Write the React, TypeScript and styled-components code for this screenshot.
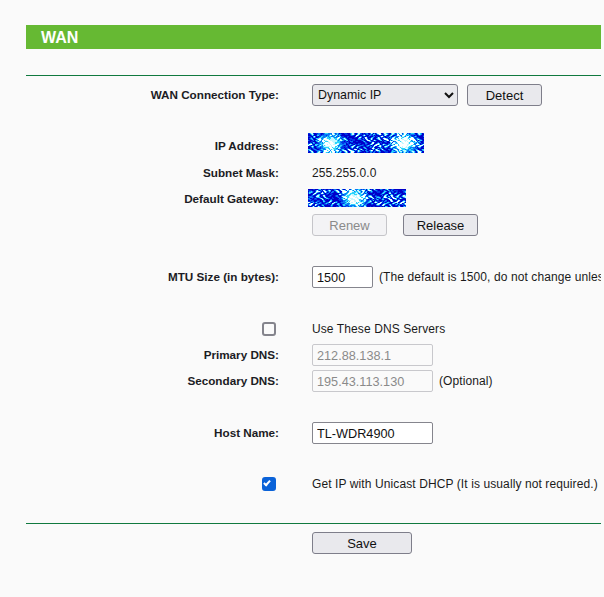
import React, { useMemo } from 'react';
import styled, { createGlobalStyle } from 'styled-components';

const GlobalStyle = createGlobalStyle`
  html, body {
    margin: 0;
    padding: 0;
    height: 100%;
    overflow: hidden;
    background: #fafafa;
  }
  body {
    font-family: Arial, "Liberation Sans", sans-serif;
    font-size: 12px;
    letter-spacing: 0.1px;
    color: #1a1a1a;
  }
`;

const Page = styled.div`
  width: 575px;
  height: 597px;
  margin-left: 26px;
  padding-top: 25px;
  box-sizing: border-box;
  overflow: hidden;
`;

const TitleBar = styled.div`
  height: 24px;
  line-height: 25px;
  background: #66b933;
  color: #fff;
  font-size: 16px;
  font-weight: 700;
  letter-spacing: 0;
  padding-left: 15px;
`;

const Divider = styled.div<{ $top: number }>`
  height: 1px;
  background: #10793f;
  margin-top: ${(props) => props.$top}px;
`;

const Row = styled.div<{ $height: number; $top?: number }>`
  display: grid;
  grid-template-columns: 253px 33px max-content;
  align-items: center;
  height: ${(props) => props.$height}px;
  margin-top: ${(props) => props.$top ?? 0}px;
  white-space: nowrap;
`;

const Label = styled.label`
  grid-column: 1;
  text-align: right;
  font-size: 11.7px;
  font-weight: 700;
  letter-spacing: 0;
  color: #1c1c24;
  padding-bottom: 2px;
`;

const CheckCell = styled.div`
  grid-column: 1;
  display: flex;
  justify-content: flex-end;
  padding-right: 3px;
`;

const Value = styled.div<{ $lift?: number }>`
  grid-column: 3;
  display: flex;
  align-items: center;
  margin-bottom: ${(props) => props.$lift ?? 0}px;
`;

const Plain = styled.span<{ $gap?: number }>`
  color: #1a1a1a;
  margin-left: ${(props) => props.$gap ?? 0}px;
`;

const Button = styled.button<{ $width: number; $gap?: number }>`
  width: ${(props) => props.$width}px;
  height: 22px;
  margin-left: ${(props) => props.$gap ?? 0}px;
  padding: 0;
  box-sizing: border-box;
  border: 1px solid #7e7e8a;
  border-radius: 3px;
  background: #e9e9ed;
  color: #111;
  font: 13px Arial, "Liberation Sans", sans-serif;

  &:disabled {
    border-color: #c5c5c9;
    background: #f3f3f5;
    color: #8a8a8a;
  }
`;

const Select = styled.select`
  width: 146px;
  height: 22px;
  box-sizing: border-box;
  padding: 0 0 0 1px;
  border: 1px solid #7e7e8a;
  border-radius: 3px;
  background: #e9e9ed;
  color: #111;
  font: 12.4px Arial, "Liberation Sans", sans-serif;
`;

const TextInput = styled.input<{ $width: number }>`
  width: ${(props) => props.$width}px;
  height: 22px;
  box-sizing: border-box;
  padding: 1px 4px 0;
  border: 1px solid #85858d;
  border-radius: 2px;
  background: #fff;
  color: #111;
  font: 12.7px Arial, "Liberation Sans", sans-serif;

  &:disabled {
    border-color: #c8c8cc;
    background: #fafafa;
    color: #8a8a8a;
  }
`;

const CheckBox = styled.input`
  appearance: none;
  position: relative;
  width: 14px;
  height: 14px;
  margin: 0;
  box-sizing: border-box;
  border: 2px solid #84848c;
  border-radius: 3px;
  background: #fafafa;

  &:checked {
    border-color: #0a62d8;
    background: #0a62d8;
  }

  &:checked::after {
    content: '';
    position: absolute;
    left: 1px;
    top: 0;
    width: 4px;
    height: 7px;
    border: solid #fff;
    border-width: 0 2px 2px 0;
    transform: rotate(42deg);
    box-sizing: border-box;
  }
`;

const FractalSvg = styled.svg`
  display: block;
  margin-left: -4px;
`;

const shade = (v: number): string => {
  if (v > 0.95) return '#ffffff';
  if (v > 0.74) return '#c4f8ff';
  if (v > 0.56) return '#2cd4fb';
  if (v > 0.38) return '#0a78f6';
  if (v > 0.2) return '#0036e6';
  return '#0000c8';
};

// the address values are masked by a fractal pattern in the picture
const Fractal = ({ width, height, spots, seed }: { width: number; height: number; spots: number[]; seed: number }) => {
  const cells = useMemo(() => {
    const out: { x: number; y: number; fill: string }[] = [];
    for (let y = 0; y < height; y += 1) {
      for (let x = 0; x < width; x += 1) {
        const px = x + seed;
        const py = y + seed * 2;
        // flecks built from crossing ripples at a few scales
        const fine =
          Math.abs(Math.sin(px * 0.47 + Math.sin(py * 0.71) * 1.8)) *
          Math.abs(Math.sin(py * 0.53 + Math.sin(px * 0.37) * 2.1));
        const coarse = 0.5 + 0.5 * Math.sin(px * 0.17 + Math.sin(py * 0.27) * 1.6) * Math.cos(py * 0.23 - px * 0.11);
        const glow = spots.reduce((best, s) => {
          const d = Math.hypot(x - s, (y - height / 2) * 1.2);
          return Math.max(best, 1 - d / 17);
        }, 0);
        out.push({ x, y, fill: shade(fine * (0.25 + coarse * 1.1) + glow * 0.95) });
      }
    }
    return out;
  }, [width, height, spots, seed]);

  return (
    <FractalSvg width={width} height={height} viewBox={`0 0 ${width} ${height}`} shapeRendering="crispEdges">
      {cells.map((c) => (
        <rect key={`${c.x}-${c.y}`} x={c.x} y={c.y} width={1} height={1} fill={c.fill} />
      ))}
    </FractalSvg>
  );
};

const IP_SPOTS = [22, 96];
const GATEWAY_SPOTS = [46];

const App = () => (
  <Page>
    <GlobalStyle />
    <TitleBar>WAN</TitleBar>
    <Divider $top={26} />
    <Row $height={22} $top={8}>
      <Label>WAN Connection Type:</Label>
      <Value>
        <Select defaultValue="Dynamic IP">
          <option>Dynamic IP</option>
        </Select>
        <Button $width={75} $gap={9}>Detect</Button>
      </Value>
    </Row>
    <Row $height={24} $top={27}>
      <Label>IP Address:</Label>
      <Value $lift={6}>
        <Fractal width={116} height={20} spots={IP_SPOTS} seed={3} />
      </Value>
    </Row>
    <Row $height={26} $top={3}>
      <Label>Subnet Mask:</Label>
      <Value>
        <Plain>255.255.0.0</Plain>
      </Value>
    </Row>
    <Row $height={26}>
      <Label>Default Gateway:</Label>
      <Value $lift={2}>
        <Fractal width={98} height={18} spots={GATEWAY_SPOTS} seed={11} />
      </Value>
    </Row>
    <Row $height={22} $top={2}>
      <Value>
        <Button $width={75} disabled>Renew</Button>
        <Button $width={75} $gap={16}>Release</Button>
      </Value>
    </Row>
    <Row $height={22} $top={30}>
      <Label>MTU Size (in bytes):</Label>
      <Value>
        <TextInput $width={61} defaultValue="1500" />
        <Plain $gap={6}>(The default is 1500, do not change unless necessary.)</Plain>
      </Value>
    </Row>
    <Row $height={22} $top={30}>
      <CheckCell>
        <CheckBox type="checkbox" />
      </CheckCell>
      <Value>
        <Plain>Use These DNS Servers</Plain>
      </Value>
    </Row>
    <Row $height={22} $top={4}>
      <Label>Primary DNS:</Label>
      <Value>
        <TextInput $width={121} defaultValue="212.88.138.1" disabled />
      </Value>
    </Row>
    <Row $height={22} $top={4}>
      <Label>Secondary DNS:</Label>
      <Value>
        <TextInput $width={121} defaultValue="195.43.113.130" disabled />
        <Plain $gap={6}>(Optional)</Plain>
      </Value>
    </Row>
    <Row $height={22} $top={30}>
      <Label>Host Name:</Label>
      <Value>
        <TextInput $width={121} defaultValue="TL-WDR4900" />
      </Value>
    </Row>
    <Row $height={22} $top={29}>
      <CheckCell>
        <CheckBox type="checkbox" defaultChecked />
      </CheckCell>
      <Value>
        <Plain>Get IP with Unicast DHCP (It is usually not required.)</Plain>
      </Value>
    </Row>
    <Divider $top={28} />
    <Row $height={22} $top={8}>
      <Value>
        <Button $width={100}>Save</Button>
      </Value>
    </Row>
  </Page>
);

export default App;
